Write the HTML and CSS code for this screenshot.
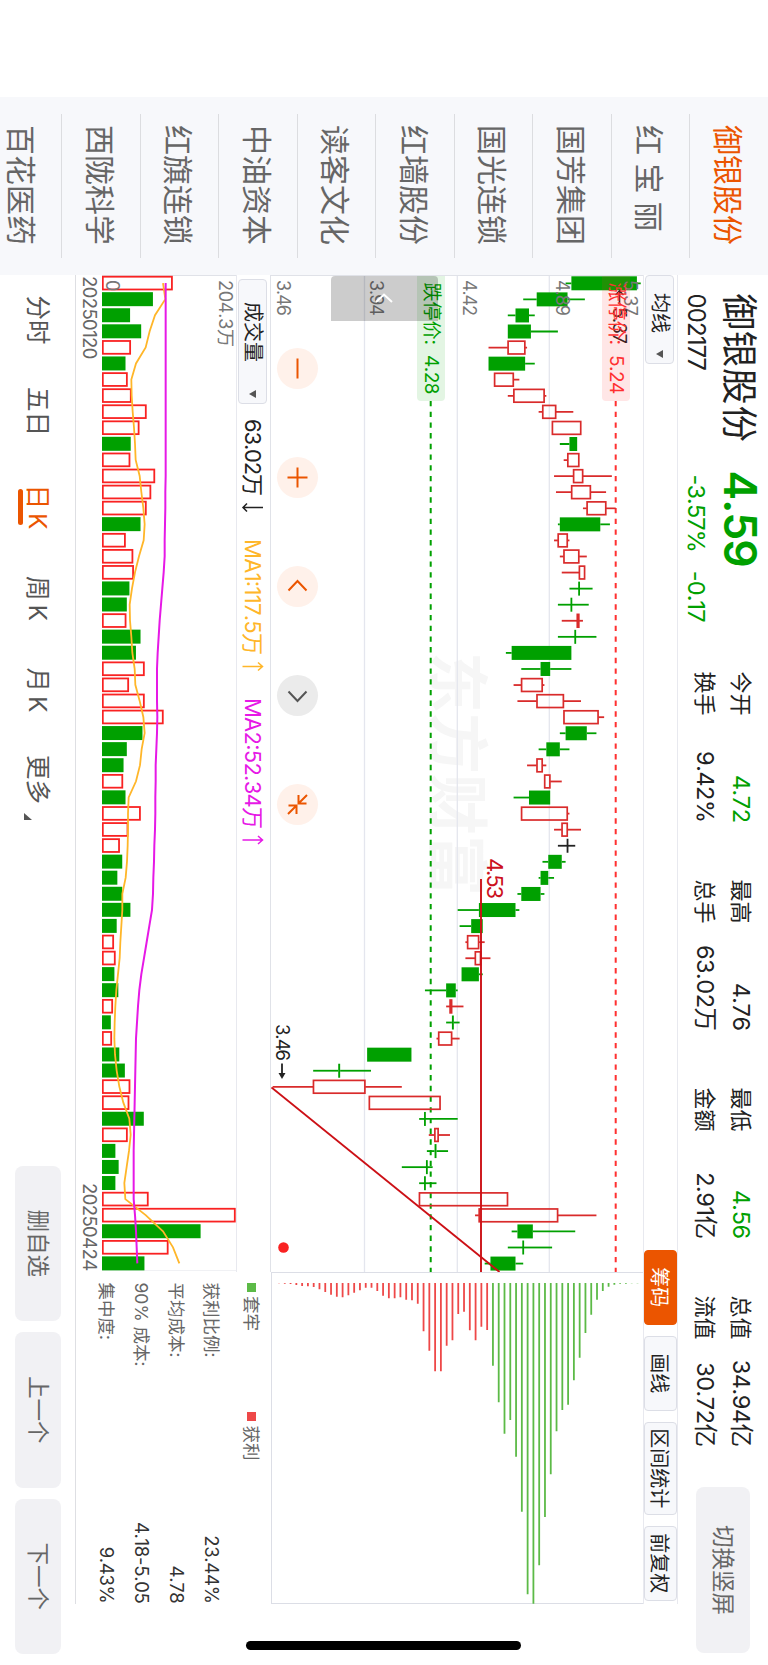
FILE: index.html
```html
<!DOCTYPE html>
<html lang="zh-CN">

<head>
    <meta charset="UTF-8">
    <meta name="viewport" content="width=device-width, initial-scale=1.0">
    <title>御银股份 002177</title>
    <link rel="stylesheet" href="styles.css">
</head>

<body>
    <div class="screen">
        <nav class="stocks">
            <a class="on">御银股份</a>
            <a>红 宝 丽</a>
            <a>国芳集团</a>
            <a>国光连锁</a>
            <a>红墙股份</a>
            <a>读客文化</a>
            <a>中油资本</a>
            <a>红旗连锁</a>
            <a>西陇科学</a>
            <a>百花医药</a>
        </nav>
        <main>
            <header>
                <div class="title">
                    <h1>御银股份</h1>
                    <div class="code">002177</div>
                </div>
                <div class="price">
                    <strong>4.59</strong>
                    <div><span>-3.57%</span><span>-0.17</span></div>
                </div>
                <dl class="stats">
                    <div><dt>今开</dt><dd class="down">4.72</dd></div>
                    <div><dt>最高</dt><dd>4.76</dd></div>
                    <div><dt>最低</dt><dd class="down">4.56</dd></div>
                    <div><dt>总值</dt><dd>34.94亿</dd></div>
                    <div><dt>换手</dt><dd>9.42%</dd></div>
                    <div><dt>总手</dt><dd>63.02万</dd></div>
                    <div><dt>金额</dt><dd>2.91亿</dd></div>
                    <div><dt>流值</dt><dd>30.72亿</dd></div>
                </dl>
                <button class="btn rotate">切换竖屏</button>
            </header>

            <section class="panel">
                <div class="toolbar">
                    <button class="tool select">均线<b></b></button>
                    <div class="tools">
                        <button class="tool on">筹码</button>
                        <button class="tool">画线</button>
                        <button class="tool wide">区间统计</button>
                        <button class="tool">前复权</button>
                    </div>
                </div>

                <div class="kline">
                    <div class="watermark">东方财富</div>
                    <svg id="kline" width="996" height="372" viewBox="0 0 996 372"></svg>
                    <div class="limit up">涨停价:<span>5.24</span></div>
                    <div class="limit dn">跌停价:<span>4.28</span></div>
                    <div class="drawer">
                        <svg width="10" height="18" viewBox="0 0 10 18"><path d="M9 1L1.5 9L9 17" /></svg>
                    </div>
                    <div class="controls">
                        <span><svg viewBox="0 0 41 41"><path d="M10.5 20.5H30.5" /></svg></span>
                        <span><svg viewBox="0 0 41 41"><path d="M10.5 20.5H30.5M20.5 10.5V30.5" /></svg></span>
                        <span><svg viewBox="0 0 41 41"><path d="M24.5 11.5L15 20.5L24.5 29.5" /></svg></span>
                        <span class="off"><svg viewBox="0 0 41 41"><path d="M16.5 11.5L26 20.5L16.5 29.5" /></svg></span>
                        <span><svg viewBox="0 0 41 41"><path d="M11 11L19 19M11 19.5H19.5V11.500M30 30L22 22M30 21.5H21.5V29.500" /></svg></span>
                    </div>
                </div>

                <div class="chips">
                    <svg id="chips" width="332" height="372" viewBox="0 0 332 372"></svg>
                </div>

                <div class="volume">
                    <div class="volume-head">
                        <button class="tool select big">成交量<b></b></button>
                        <svg id="vol-legend" width="700" height="34" viewBox="0 0 700 34">
                            <text x="15" y="25" textLength="77" fill="#222">63.02万</text>
                            <path d="M103.5 7V27M99.5 23L103.5 27L107.5 23" stroke="#222" />
                            <text x="135" y="25" textLength="116" fill="#ffb629">MA1:117.5万</text>
                            <path d="M262.5 27.5V7.5M258.5 12L262.5 7.5L266.5 12" stroke="#ffb629" />
                            <text x="294" y="25" textLength="131" fill="#e619e6">MA2:52.34万</text>
                            <path d="M436 27.5V7.5M432 12L436 7.5L440 12" stroke="#e619e6" />
                        </svg>
                    </div>
                    <svg id="volume" width="996" height="134" viewBox="0 0 996 134"></svg>
                    <div class="dates"><span>20250120</span><span>20250424</span></div>
                </div>

                <div class="cost">
                    <div class="legend">
                        <span class="lock">套牢</span>
                        <span class="gain">获利</span>
                    </div>
                    <p>获利比例:<b>23.44%</b></p>
                    <p>平均成本:<b>4.78</b></p>
                    <p>90% 成本:<b>4.18-5.05</b></p>
                    <p>集中度:<b>9.43%</b></p>
                </div>
            </section>

            <footer>
                <div class="tabs">
                    <a>分时</a>
                    <a>五日</a>
                    <a class="k on">日K</a>
                    <a class="k">周K</a>
                    <a class="k">月K</a>
                    <a class="more">更多</a>
                </div>
                <div class="actions">
                    <button class="btn">删自选</button>
                    <button class="btn">上一个</button>
                    <button class="btn">下一个</button>
                </div>
            </footer>
        </main>
        <div class="home-bar"></div>
    </div>
    <script src="chart.js"></script>
</body>

</html>
```

FILE: styles.css
```css
* {
    margin: 0;
    padding: 0;
    box-sizing: border-box;
}

body {
    width: 768px;
    height: 1665px;
    overflow: hidden;
    background-color: #fff;
    font-family: Inter, "Noto Sans CJK SC", sans-serif;
    font-kerning: none;
    color: #222;
}

button {
    font-family: inherit;
    border: none;
}

b {
    font-weight: normal;
}

/* landscape phone screen, turned clockwise */
.screen {
    width: 1665px;
    height: 768px;
    display: flex;
    padding-left: 97px;
    position: relative;
    transform-origin: 0 0;
    transform: translateX(768px) rotate(90deg);
}

.stocks {
    width: 178px;
    height: 768px;
    overflow: hidden;
    background-color: #f7f8fb;
    padding: 0 17px;
    flex-shrink: 0;
}

.stocks a {
    display: block;
    height: 78.5px;
    line-height: 80px;
    padding-left: 11px;
    font-size: 30px;
    color: #666;
    border-bottom: 1px solid #dcdde0;
    white-space: nowrap;
}

.stocks a.on {
    color: #eb5500;
}

main {
    width: 1390px;
    display: flex;
    flex-direction: column;
}

header {
    height: 89.5px;
    display: flex;
    padding: 0 11px 0 18.5px;
}

.title {
    width: 179px;
}

h1 {
    font-size: 36.5px;
    font-weight: normal;
    line-height: 44px;
    padding-top: 7px;
    letter-spacing: 0.8px;
}

.code {
    font-size: 24px;
    line-height: 30px;
    padding-top: 6px;
    letter-spacing: -0.9px;
}

.price {
    width: 199px;
    color: #00a000;
}

.price strong {
    display: block;
    font-size: 44.5px;
    font-weight: 600;
    line-height: 44px;
    padding-top: 6px;
    margin-left: -2px;
    letter-spacing: -1px;
}

.price div {
    font-size: 23.5px;
    line-height: 30px;
    padding-top: 7px;
    letter-spacing: -0.9px;
    display: flex;
    gap: 19px;
    padding-left: 2px;
}

.stats {
    width: 776px;
    display: grid;
    grid-template-columns: repeat(4, 151px);
    grid-template-rows: 36px 36px;
    column-gap: 57px;
    padding-top: 9px;
}

.stats div {
    display: flex;
    justify-content: space-between;
    line-height: 36px;
    font-size: 22px;
}

.stats dd {
    font-size: 23.5px;
    letter-spacing: -0.5px;
    white-space: nowrap;
}

.stats .down {
    color: #00a000;
}

.btn {
    height: 46px;
    width: 155.5px;
    border-radius: 8px;
    background-color: #f1f1f4;
    color: #666;
    font-size: 22.5px;
    line-height: 46px;
    text-align: center;
}

.rotate {
    width: 166px;
    height: 53.5px;
    margin: 18px 0 0 39.5px;
    flex-shrink: 0;
}

.panel {
    width: 1328.5px;
    height: 603px;
    display: grid;
    grid-template-columns: 996.5px 332px;
    grid-template-rows: 34px 372.5px 194.5px;
    border-top: 1px solid #e8e9ef;
    border-bottom: 1px solid #dedfe3;
}

.toolbar {
    grid-column: 1 / 3;
    display: flex;
    justify-content: space-between;
    border-bottom: 1px solid #e8e9ef;
}

.tools {
    display: flex;
    gap: 11.5px;
    padding-right: 3px;
}

.tool {
    background-color: #f7f8fb;
    border: 1px solid #dcdee6;
    border-radius: 4px;
    font-size: 20px;
    line-height: 31px;
    padding-top: 2px;
    color: #222;
    min-width: 74.5px;
    white-space: nowrap;
}

.tool.wide {
    min-width: 92.5px;
}

.tool.on {
    background-color: #eb5500;
    border-color: #eb5500;
    color: #fff;
}

.tool.select {
    width: 89px;
    height: 29px;
    line-height: 27px;
    margin-top: 3px;
    padding: 1px 5px 0 17px;
    display: flex;
    align-items: center;
    justify-content: space-between;
}

.tool.big {
    width: 125px;
    margin: 3px 0 0 4px;
    padding: 0 5px 0 22px;
}

.select b {
    border: 4px solid transparent;
    border-top: 7px solid #555;
    border-bottom: 0;
}

.kline {
    position: relative;
    border-left: 1px solid #e0e2e8;
}

.kline > svg,
.volume > svg,
.chips svg {
    display: block;
    position: relative;
}

.watermark {
    position: absolute;
    left: 376px;
    top: 144px;
    font-size: 61px;
    line-height: 84px;
    font-weight: bold;
    color: #f6f6f6;
}

.limit {
    position: absolute;
    left: 0;
    height: 28px;
    width: 125px;
    padding-left: 6.5px;
    border-radius: 0 4px 4px 0;
    font-size: 19px;
    line-height: 27px;
    display: flex;
    white-space: nowrap;
}

.limit span {
    margin-left: 10px;
    letter-spacing: -0.5px;
}

.up {
    top: 13.5px;
    color: #ff3030;
    background-color: rgba(255, 48, 48, 0.12);
}

.dn {
    top: 198px;
    color: #00a000;
    background-color: rgba(0, 160, 0, 0.11);
}

.drawer {
    position: absolute;
    left: 0;
    top: 205.5px;
    width: 44.5px;
    height: 107px;
    border-radius: 4px 0 0 4px;
    background-color: rgba(0, 0, 0, 0.2);
    padding: 45px 0 0 17px;
}

.drawer path {
    fill: none;
    stroke: #fff;
    stroke-width: 2;
}

.controls {
    position: absolute;
    left: 72px;
    top: 325.5px;
    display: flex;
    gap: 68px;
}

.controls span {
    width: 41px;
    height: 41px;
    border-radius: 50%;
    background-color: #fff1ea;
}

.controls path {
    fill: none;
    stroke: #eb5500;
    stroke-width: 2;
}

.controls .off {
    background-color: #ebebeb;
}

.controls .off path {
    stroke: #555;
}

.chips {
    border: 1px solid #dcdee6;
    border-top: 0;
}

.volume-head {
    height: 34.5px;
    display: flex;
    border-top: 1px solid #e0e2e8;
    border-bottom: 1px solid #e8e9ef;
}

#vol-legend text {
    font-size: 22px;
}

#vol-legend path {
    fill: none;
    stroke-width: 1.5;
}

.dates {
    display: flex;
    justify-content: space-between;
    padding: 0 1px;
    font-size: 18.5px;
    line-height: 25px;
    letter-spacing: -0.6px;
    color: #666;
}

.cost {
    padding: 4px 0 0 11px;
    font-size: 17.5px;
    color: #666;
}

.legend {
    display: flex;
    height: 38px;
    line-height: 31px;
}

.legend span {
    width: 129.5px;
    display: flex;
    align-items: center;
    height: 31px;
    gap: 4.5px;
}

.legend span::before {
    content: "";
    width: 9px;
    height: 9px;
    background-color: #5cba47;
}

.legend .gain::before {
    background-color: #ee4848;
}

.cost p {
    display: flex;
    justify-content: space-between;
    height: 35px;
    line-height: 35px;
}

.cost b {
    color: #333;
    font-size: 18.5px;
    letter-spacing: -0.3px;
}

footer {
    flex: 1;
    display: flex;
    justify-content: space-between;
    padding: 14.5px 11px 0 20.5px;
}

.tabs {
    display: flex;
    font-size: 24.5px;
    line-height: 46px;
    color: #555;
}

.tabs a {
    width: 91.5px;
    height: 46px;
    position: relative;
    white-space: nowrap;
}

.tabs .k {
    left: 6px;
    letter-spacing: 4px;
}

.tabs .on {
    color: #eb5500;
}

.tabs .on::after {
    content: "";
    position: absolute;
    left: 4px;
    bottom: 3px;
    width: 36px;
    height: 5.5px;
    border-radius: 3px;
    background-color: #eb5500;
}

.tabs .more {
    left: 2px;
}

.tabs .more::after {
    content: "";
    position: absolute;
    left: 58px;
    top: 29px;
    border-left: 7px solid transparent;
    border-bottom: 8px solid #555;
}

.actions {
    display: flex;
    gap: 11px;
}

.home-bar {
    position: absolute;
    left: 1641px;
    top: 246.5px;
    width: 9px;
    height: 275px;
    border-radius: 5px;
    background-color: #000;
}

.axis {
    font-size: 18px;
    fill: #777;
}
```

FILE: chart.js
```javascript
var NS = 'http://www.w3.org/2000/svg';
var GREEN = '#00a000';
var RED = '#d92b2b';

// open, high, low, close
var bars = [
    [5.35, 5.37, 4.98, 5.01], [4.99, 5.08, 4.76, 4.83], [4.79, 4.82, 4.68, 4.72], [4.80, 4.94, 4.68, 4.68],
    [4.68, 4.78, 4.58, 4.77], [4.77, 4.82, 4.58, 4.58], [4.61, 4.74, 4.61, 4.71], [4.71, 4.88, 4.68, 4.87],
    [4.86, 5.02, 4.84, 4.93], [4.91, 5.06, 4.91, 5.06], [5.04, 5.04, 4.95, 5.00], [4.99, 5.05, 4.97, 5.05],
    [5.02, 5.22, 4.92, 5.07], [5.01, 5.19, 4.93, 5.11], [5.09, 5.24, 5.07, 5.19], [5.16, 5.21, 4.94, 4.95],
    [4.94, 5.00, 4.92, 4.99], [4.97, 5.09, 4.95, 5.05], [5.05, 5.08, 4.96, 5.08], [5.05, 5.12, 5.00, 5.05],
    [5.01, 5.10, 4.94, 5.01], [5.04, 5.07, 4.96, 5.05], [5.03, 5.14, 4.94, 5.03], [5.01, 5.01, 4.67, 4.70],
    [4.90, 5.01, 4.75, 4.85], [4.75, 4.87, 4.71, 4.86], [4.83, 5.06, 4.73, 4.97], [4.97, 5.18, 4.97, 5.15],
    [5.09, 5.14, 4.95, 4.98], [4.95, 5.00, 4.84, 4.88], [4.83, 4.88, 4.78, 4.86], [4.87, 4.96, 4.87, 4.90],
    [4.90, 4.90, 4.71, 4.79], [4.75, 5.00, 4.75, 4.99], [4.96, 5.06, 4.92, 4.99], [4.99, 5.03, 4.94, 4.99],
    [4.96, 4.98, 4.86, 4.89], [4.89, 4.92, 4.84, 4.85], [4.85, 4.87, 4.73, 4.75], [4.72, 4.74, 4.42, 4.53],
    [4.55, 4.55, 4.43, 4.49], [4.47, 4.56, 4.46, 4.53], [4.51, 4.59, 4.46, 4.54], [4.53, 4.55, 4.44, 4.44],
    [4.41, 4.42, 4.25, 4.36], [4.38, 4.45, 4.36, 4.39], [4.40, 4.43, 4.36, 4.39], [4.32, 4.43, 4.31, 4.39],
    [4.18, 4.18, 3.95, 3.95], [3.81, 3.97, 3.67, 3.80], [3.67, 4.13, 3.46, 3.94], [3.96, 4.33, 3.96, 4.33],
    [4.25, 4.42, 4.22, 4.25], [4.30, 4.38, 4.27, 4.32], [4.31, 4.37, 4.26, 4.30], [4.26, 4.29, 4.13, 4.26],
    [4.25, 4.31, 4.22, 4.25], [4.22, 4.68, 4.22, 4.68], [4.53, 5.14, 4.51, 4.94], [4.81, 5.03, 4.70, 4.73],
    [4.76, 4.91, 4.68, 4.76], [4.72, 4.76, 4.56, 4.59]
];
// bars that close above the open
var rising = [4, 6, 7, 8, 9, 11, 12, 13, 14, 16, 17, 18, 21, 25, 26, 27, 30, 31, 33, 34, 41, 42, 45, 47, 50, 51, 53, 57, 58];

// volume, negative on a falling day
var volumes = [108, -78, -43, -60, 44, -36, 39, 45, 68, 57, -44, 43, 81, 75, 68, -59, 36, 47.5, 48.5, -42,
    -38, 37, -59, -52, 65, 41, 65, 94, -62, -38, -33, 32, -36, 59, 40, 27, -31, -23.5, -31, -43.5,
    -22.5, 18, 20.5, -19, -25, 16.5, -13.5, 15, -26.5, -35, 43, 41.5, -64, 39, -20.5, -25.5, -20.5, 71, 204.3, -151,
    101.5, -65];

// moving averages, in thirds of a pixel above the base line
var ma1 = [183, 190, 159, 143, 131, 102, 88, 89, 92, 96, 99, 101, 113, 118, 124, 128, 125, 111, 99, 90, 83, 84,
    88, 91, 98, 100, 113, 124, 128, 119, 114, 102, 80, 78, 78, 77, 75, 71, 61, 61, 58, 55, 53, 48, 43, 40, 38, 37,
    39, 44, 52, 64, 82, 86, 81, 74, 67, 70, 131, 183, 213, 232];
var ma2 = [191, 191, 191, 191, 191, 191, 191, 191, 191, 191, 191, 191, 191, 190, 190, 189, 188, 188, 185, 181, 177,
    173, 170, 167, 165, 165, 165, 166, 165, 163, 161, 161, 160, 160, 159, 157, 156, 154, 153, 150, 142, 134, 126,
    118, 112, 108, 105, 102, 101, 100, 99, 98, 97, 96, 95, 95, 95, 95, 99, 102, 104, 106];

// cost distribution, lowest price first
var gain = [1, 2, 3, 6, 9, 10, 12, 19, 27, 35, 41, 43, 37, 29, 22, 14, 14, 24, 38, 46, 46, 43, 50, 52, 62, 145,
    203, 265, 265, 188, 172, 93, 86, 142, 172, 131, 141];
var lock = [248, 358, 452, 411, 521, 686, 934, 962, 847, 702, 574, 445, 381, 365, 292, 224, 150, 95, 50, 24, 11, 5,
    2, 2, 1, 1];

function add(svg, name, attrs, text) {
    var el = document.createElementNS(NS, name);
    for (var key in attrs)
        el.setAttribute(key, attrs[key]);
    if (text)
        el.textContent = text;
    svg.appendChild(el);
    return el;
}

function line(svg, x1, y1, x2, y2, color, width) {
    return add(svg, 'line', { x1: x1, y1: y1, x2: x2, y2: y2, stroke: color, 'stroke-width': width });
}

function barX(i) {
    return 7.3 + i * 16.07;
}

function priceY(p) {
    return 370.3 - (p - 3.46) * 192.7;
}

function drawKline() {
    var svg = document.getElementById('kline');
    [93.7, 185.7, 278.5].forEach(function (y) {
        line(svg, 0, y, 996, y, '#e4e6ee', 1.3);
    });
    line(svg, 125, 27.3, 996, 27.3, '#ff3030', 2).setAttribute('stroke-dasharray', '5.35 5.35');
    line(svg, 125, 212.3, 996, 212.3, GREEN, 2).setAttribute('stroke-dasharray', '5.35 5.35');

    bars.forEach(function (b, i) {
        var x = barX(i);
        var up = rising.indexOf(i) >= 0;
        var color = up ? RED : GREEN;
        if (i === 35)
            color = '#222';
        var top = priceY(Math.max(b[0], b[3]));
        var bottom = priceY(Math.min(b[0], b[3]));
        line(svg, x, priceY(b[1]), x, top, color, 1.8);
        line(svg, x, bottom, x, priceY(b[2]), color, 1.8);
        if (up)
            add(svg, 'rect', {
                x: x - 6.4, y: top + 0.3, width: 12.8, height: Math.max(bottom - top - 0.6, 1.5),
                fill: 'none', stroke: color, 'stroke-width': 1.7
            });
        else
            add(svg, 'rect', {
                x: x - 7, y: top - (bottom - top < 1 ? 0.9 : 0), width: 14,
                height: Math.max(bottom - top, 1.8), fill: color
            });
    });

    // support line and trend line
    line(svg, 603, 162, 996, 162, '#cc1016', 1.9);
    line(svg, 811.5, 371.5, 996, 143.5, '#cc1016', 1.9);
    add(svg, 'text', { x: 582, y: 156.5, fill: '#cc1020', 'font-size': 22, textLength: 41 }, '4.53');

    [['5.37', 19.5], ['4.89', 87.3], ['4.42', 180.5], ['3.94', 273], ['3.46', 366]].forEach(function (t) {
        add(svg, 'text', { x: 4, y: t[1], 'class': 'axis', textLength: 36 }, t[0]);
    });

    // highest and lowest marks
    add(svg, 'path', { d: 'M15 23.5H28M19 19.5L15 23.5L19 27.5', stroke: '#222', 'stroke-width': 1.6, fill: 'none' });
    add(svg, 'text', { x: 31, y: 30, fill: '#222', 'font-size': 18.5, textLength: 37 }, '5.37');
    add(svg, 'text', { x: 748, y: 367.5, fill: '#222', 'font-size': 18.5, textLength: 37 }, '3.46');
    add(svg, 'path', { d: 'M787.5 361H797', stroke: '#222', 'stroke-width': 1.8 });
    add(svg, 'path', { d: 'M797 357.5L803 361L797 364.5Z', fill: '#222' });
    add(svg, 'circle', { cx: 971.5, cy: 359.5, r: 5.3, fill: '#f92222' });
}

function drawVolume() {
    var svg = document.getElementById('volume');
    line(svg, 0.5, 0, 0.5, 134, '#e0e2e8', 1);
    line(svg, 996, 0, 996, 134, '#e0e2e8', 1);
    volumes.forEach(function (v, i) {
        var h = Math.abs(v) / 204.3 * 133.4;
        if (v > 0)
            add(svg, 'rect', {
                x: barX(i) + 0.8 - 6.4, y: 134 - h + 0.6, width: 12.8, height: h - 1.4,
                fill: 'none', stroke: '#f92222', 'stroke-width': 1.8
            });
        else
            add(svg, 'rect', { x: barX(i) + 0.8 - 7, y: 134 - h, width: 14, height: h, fill: GREEN });
    });
    [[ma1, '#ffb629', 1.8], [ma2, '#e619e6', 2]].forEach(function (m) {
        var points = m[0].map(function (v, i) {
            return (barX(i) + 0.8) + ',' + (134 - v / 3);
        });
        add(svg, 'polyline', { points: points.join(' '), fill: 'none', stroke: m[1], 'stroke-width': m[2] });
    });
    add(svg, 'text', { x: 5, y: 17.5, 'class': 'axis', textLength: 67 }, '204.3万');
    add(svg, 'text', { x: 5, y: 130.5, 'class': 'axis' }, '0');
}

function drawChips() {
    var svg = document.getElementById('chips');
    gain.concat(lock).forEach(function (v, i) {
        var y = 364 - i * 5.782;
        line(svg, 10, y, 10 + v / 3, y, i < gain.length ? '#ee4848' : '#5cba47', 1.8);
    });
}

drawKline();
drawVolume();
drawChips();
```
